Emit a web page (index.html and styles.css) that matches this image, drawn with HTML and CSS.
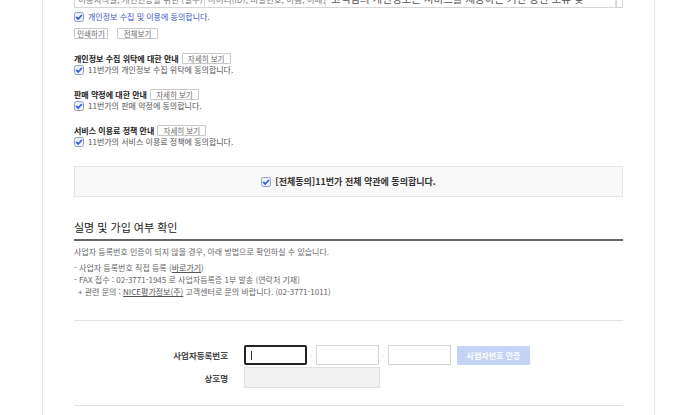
FILE: index.html
```html
<!DOCTYPE html>
<html lang="ko">
<head>
<meta charset="utf-8">
<title>가입</title>
<link rel="stylesheet" href="styles.css">
</head>
<body>
<div class="page">
  <div class="terms-scroll">
    <div class="terms-row">
      <div class="cell c1">이용자식별, 개인인증을 위한 (필수)</div>
      <div class="cell c2">아이디(ID), 비밀번호, 이름, 이메일</div>
      <div class="cell c3">고객님의 개인정보는 서비스를 제공하는 기간 동안 보유 및</div>
      <div class="cell sb"></div>
    </div>
  </div>

  <label class="agree blue">
    <svg class="cb" width="10" height="10" viewBox="0 0 10 10"><rect x="0.5" y="0.5" width="9" height="9" rx="2" fill="#eef2fb" stroke="#8e9cc2"/><path d="M2.2 5 L4.2 7 L7.9 3" fill="none" stroke="#3560d4" stroke-width="1.8"/></svg>
    <span>개인정보 수집 및 이용에 동의합니다.</span>
  </label>
  <div class="btns">
    <button class="btn btn-print">인쇄하기</button>
    <button class="btn btn-all">전체보기</button>
  </div>

  <div class="sect first">
    <div class="sect-head"><strong>개인정보 수집 위탁에 대한 안내</strong><button class="btn btn-more">자세히 보기</button></div>
    <label class="agree">
      <svg class="cb" width="10" height="10" viewBox="0 0 10 10"><rect x="0.5" y="0.5" width="9" height="9" rx="2" fill="#eef2fb" stroke="#8e9cc2"/><path d="M2.2 5 L4.2 7 L7.9 3" fill="none" stroke="#3560d4" stroke-width="1.8"/></svg>
      <span>11번가의 개인정보 수집 위탁에 동의합니다.</span>
    </label>
  </div>

  <div class="sect">
    <div class="sect-head"><strong>판매 약정에 대한 안내</strong><button class="btn btn-more">자세히 보기</button></div>
    <label class="agree">
      <svg class="cb" width="10" height="10" viewBox="0 0 10 10"><rect x="0.5" y="0.5" width="9" height="9" rx="2" fill="#eef2fb" stroke="#8e9cc2"/><path d="M2.2 5 L4.2 7 L7.9 3" fill="none" stroke="#3560d4" stroke-width="1.8"/></svg>
      <span>11번가의 판매 약정에 동의합니다.</span>
    </label>
  </div>

  <div class="sect">
    <div class="sect-head"><strong>서비스 이용료 정책 안내</strong><button class="btn btn-more">자세히 보기</button></div>
    <label class="agree">
      <svg class="cb" width="10" height="10" viewBox="0 0 10 10"><rect x="0.5" y="0.5" width="9" height="9" rx="2" fill="#eef2fb" stroke="#8e9cc2"/><path d="M2.2 5 L4.2 7 L7.9 3" fill="none" stroke="#3560d4" stroke-width="1.8"/></svg>
      <span>11번가의 서비스 이용료 정책에 동의합니다.</span>
    </label>
  </div>

  <div class="all-agree">
    <label class="agree strong">
      <svg class="cb" width="10" height="10" viewBox="0 0 10 10"><rect x="0.5" y="0.5" width="9" height="9" rx="2" fill="#eef2fb" stroke="#8e9cc2"/><path d="M2.2 5 L4.2 7 L7.9 3" fill="none" stroke="#3560d4" stroke-width="1.8"/></svg>
      <span>[전체동의]11번가 전체 약관에 동의합니다.</span>
    </label>
  </div>

  <h3 class="sec-title">실명 및 가입 여부 확인</h3>
  <p class="desc">사업자 등록번호 인증이 되지 않을 경우, 아래 방법으로 확인하실 수 있습니다.</p>
  <ul class="notes">
    <li>- 사업자 등록번호 직접 등록 (<u>바로가기</u>)</li>
    <li>- FAX 접수 : 02-3771-1945 로 사업자등록증 1부 발송 (연락처 기재)</li>
    <li class="sub">+ 관련 문의 : <u>NICE평가정보(주)</u> 고객센터로 문의 바랍니다. (02-3771-1011)</li>
  </ul>

  <div class="divider"></div>

  <div class="form">
    <div class="label">사업자등록번호</div>
    <div class="field-row">
      <div class="input focus"><span class="caret"></span></div>
      <span class="dash">-</span>
      <div class="input"></div>
      <span class="dash">-</span>
      <div class="input"></div>
      <button class="verify">사업자번호 인증</button>
    </div>
    <div class="label">상호명</div>
    <div class="field-row">
      <div class="input wide disabled"></div>
    </div>
  </div>

  <div class="divider bottom"></div>
</div>
</body>
</html>
```

FILE: styles.css
```css
* { box-sizing: border-box; }
html, body { margin: 0; padding: 0; background: #fff; }
body {
  font-family: "Noto Sans CJK KR", "Noto Sans", sans-serif;
  font-size: 8px;
  color: #444;
  overflow: hidden;
  height: 415px;
}
.page {
  margin-left: 42px;
  width: 613px;
  min-height: 415px;
  border-left: 1px solid #e8e8e8;
  border-right: 1px solid #e8e8e8;
  padding: 0 31px;
}

/* top terms table (scrolled) */
.terms-scroll {
  height: 8px;
  overflow: hidden;
  border-left: 1px solid #d6d6d6;
  border-right: 1px solid #d6d6d6;
  border-bottom: 1px solid #d6d6d6;
}
.terms-row {
  display: grid;
  grid-template-columns: 130px 121px 290px 1fr;
  margin-top: -8px;
  height: 20px;
}
.cell {
  border-right: 1px solid #dedede;
  white-space: nowrap;
  overflow: hidden;
  line-height: 14px;
  color: #777;
  padding-left: 3px;
  font-size: 8.5px;
}
.c3 { font-size: 10.5px; color: #555; padding-left: 5px; line-height: 14px; }
.sb { border-right: none; border-left: 1px solid #d6d6d6; }

/* agree rows */
.agree {
  display: flex;
  align-items: center;
  gap: 4px;
  height: 12px;
  line-height: 12px;
  color: #555;
  white-space: nowrap;
}
.agree .cb { flex: none; }
.agree.blue { margin-top: 3px; color: #3b56c4; }
.agree.strong { font-weight: bold; font-size: 9px; color: #333; }

.btns { display: flex; gap: 9px; margin-top: 5px; }
.btn {
  font-family: inherit;
  font-size: 7.5px;
  color: #666;
  background: #fff;
  border: 1px solid #c8c8c8;
  border-radius: 1px;
  height: 11px;
  line-height: 9px;
  padding: 0;
  text-align: center;
}
.btn-print { width: 34px; }
.btn-all { width: 41px; }
.btn-more { width: 49px; margin-left: 3px; }

.sect { margin-top: 12px; }
.sect.first { margin-top: 13px; }
.sect-head {
  display: flex;
  align-items: center;
  height: 12px;
}
.sect-head strong { color: #222; font-size: 8px; }

/* all agree box */
.all-agree {
  margin-top: 18px;
  height: 31px;
  background: #f8f8f8;
  border: 1px solid #e4e4e4;
  display: flex;
  align-items: center;
  justify-content: center;
}

.sec-title {
  margin: 23px 0 0;
  font-size: 11px;
  font-weight: normal;
  color: #222;
  line-height: 14px;
  padding-bottom: 5px;
  border-bottom: 2px solid #666;
}
.desc {
  margin: 5px 0 0;
  line-height: 12px;
  color: #666;
}
.notes {
  list-style: none;
  margin: 4px 0 0;
  padding: 0;
  color: #666;
}
.notes li { line-height: 12px; }
.notes li.sub { padding-left: 4px; }
.notes u { color: #555; }

.divider { margin-top: 22px; border-top: 1px solid #e2e2e2; height: 0; }
.divider.bottom { margin-top: 17px; }

/* form */
.form {
  margin-top: 24px;
  display: grid;
  grid-template-columns: 154px auto;
  column-gap: 16px;
  row-gap: 2px;
  align-items: center;
}
.label {
  text-align: right;
  font-weight: bold;
  color: #444;
  font-size: 8.5px;
}
.field-row { display: flex; align-items: center; }
.input {
  width: 63px;
  height: 20px;
  border: 1px solid #d4d4d4;
  background: #fff;
  display: flex;
  align-items: center;
  padding-left: 6px;
}
.input.focus { border: 2px solid #222; border-radius: 2px; padding-left: 5px; }
.caret { width: 1px; height: 9px; background: #333; }
.input.wide { width: 136px; height: 21px; }
.input.disabled { background: #f1f1f1; border-color: #e0e0e0; }
.dash { width: 9px; text-align: center; color: #ccc; font-size: 8px; }
.verify {
  margin-left: 6px;
  width: 73px;
  height: 19px;
  border: none;
  border-radius: 1px;
  background: #c5d3f6;
  color: #fff;
  font-family: inherit;
  font-weight: bold;
  font-size: 8px;
  padding: 0;
}
```
